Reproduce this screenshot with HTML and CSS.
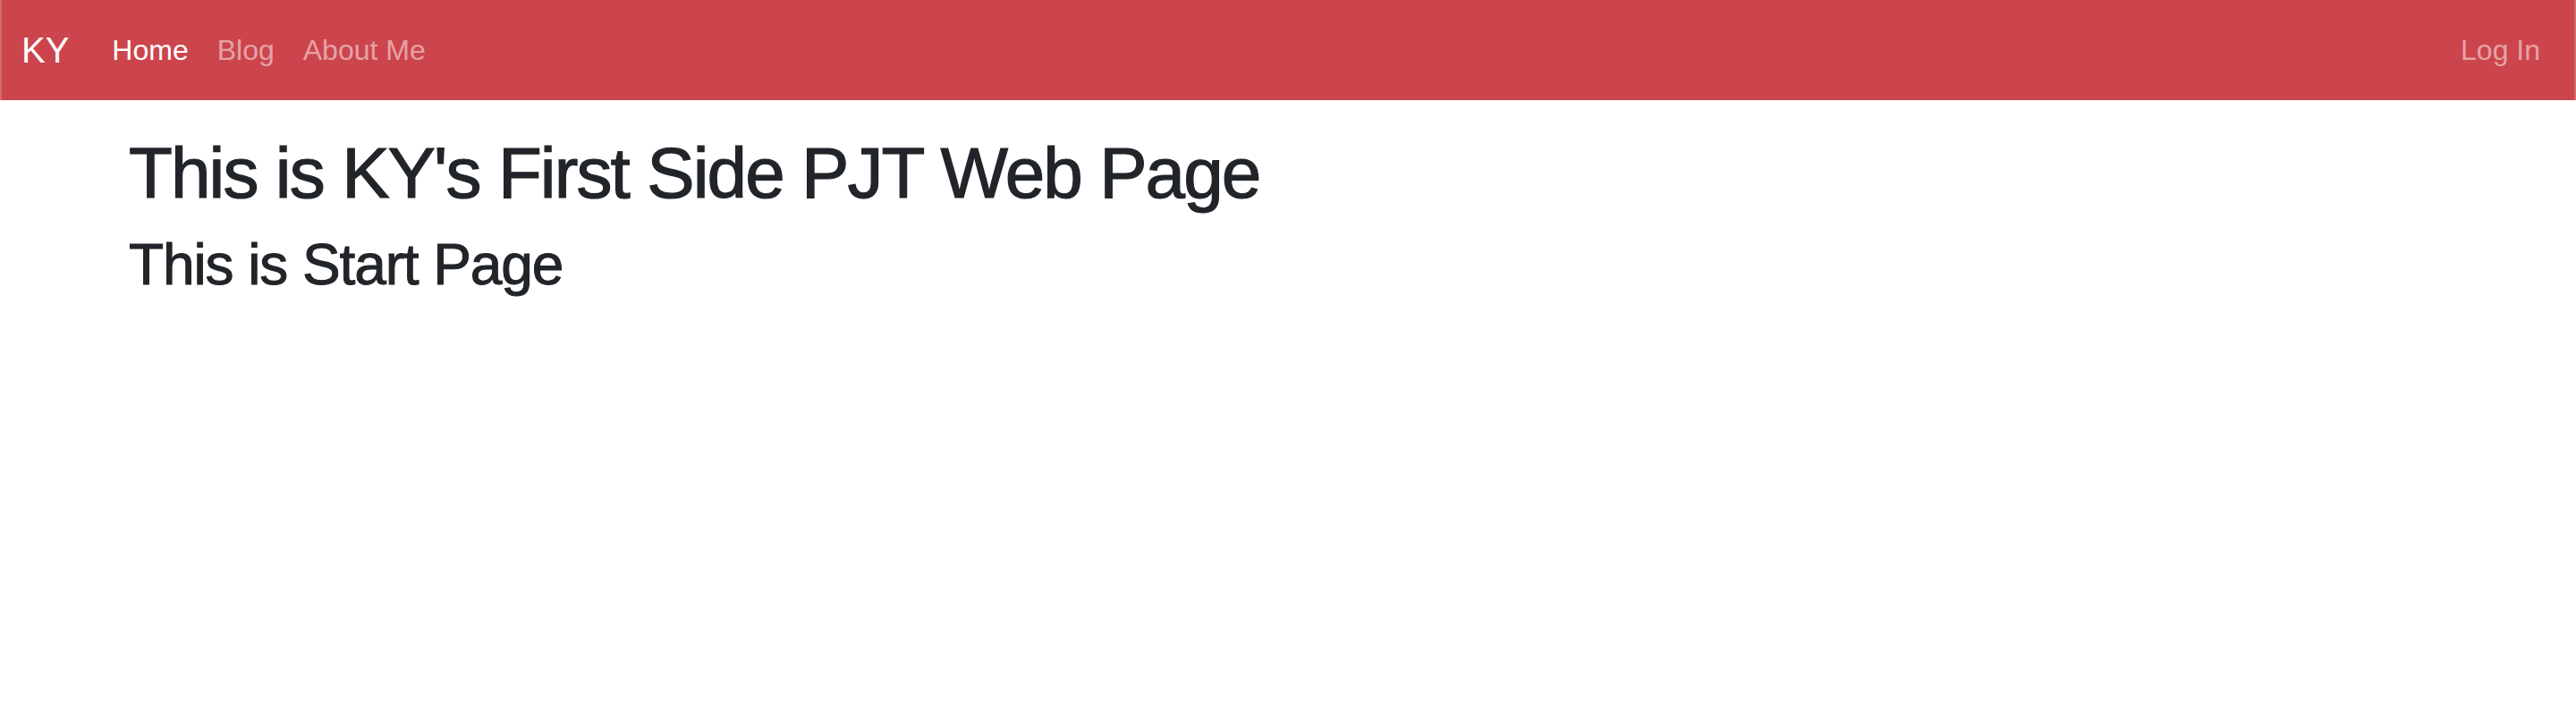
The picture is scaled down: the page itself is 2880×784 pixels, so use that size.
FILE: index.html
```html
<!DOCTYPE html>
<html lang="en">
<head>
<meta charset="utf-8">
<title>KY</title>
<link rel="stylesheet" href="styles.css">
</head>
<body>
<nav class="navbar">
  <a class="brand" href="#">KY</a>
  <ul class="nav">
    <li><a class="nav-link active" href="#">Home</a></li>
    <li><a class="nav-link" href="#">Blog</a></li>
    <li><a class="nav-link" href="#">About Me</a></li>
  </ul>
  <ul class="nav nav-right">
    <li><a class="nav-link" href="#">Log In</a></li>
  </ul>
</nav>
<main class="content">
  <h1 class="title">This is KY's First Side PJT Web Page</h1>
  <h2 class="subtitle">This is Start Page</h2>
</main>
</body>
</html>
```

FILE: styles.css
```css
html, body {
  margin: 0;
  padding: 0;
  background: #ffffff;
}

body {
  font-family: "Liberation Sans", Arial, sans-serif;
  color: #212529;
}

.navbar {
  display: flex;
  align-items: center;
  height: 112px;
  box-sizing: border-box;
  padding: 16px 22px;
  background: #cc454c;
  border-left: 2px solid #d6696e;
  border-right: 2px solid #d6696e;
}

.brand {
  font-size: 40px;
  line-height: 60px;
  padding: 10px 0;
  margin-right: 32px;
  color: #ffffff;
  text-decoration: none;
}

.nav {
  display: flex;
  list-style: none;
  margin: 0;
  padding: 0;
}

.nav-right {
  margin-left: auto;
}

.nav-link {
  display: block;
  padding: 16px;
  font-size: 32px;
  line-height: 48px;
  color: rgba(255, 255, 255, 0.5);
  text-decoration: none;
}

.nav-link.active {
  color: #ffffff;
}

.content {
  padding: 34px 144px 0;
}

.title {
  margin: 0 0 16px;
  font-size: 80px;
  line-height: 1.2;
  font-weight: 500;
  letter-spacing: -1.9px;
  -webkit-text-stroke: 1.2px #212529;
}

.subtitle {
  margin: 0;
  font-size: 64px;
  line-height: 1.2;
  font-weight: 500;
  letter-spacing: -1.1px;
  -webkit-text-stroke: 1px #212529;
}
```
